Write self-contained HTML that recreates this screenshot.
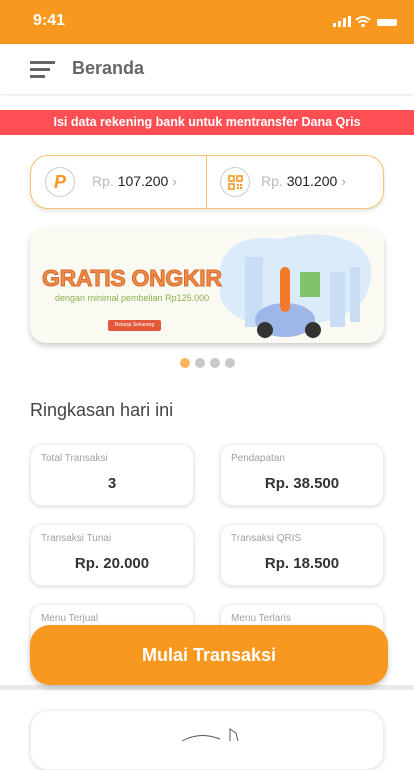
<!DOCTYPE html>
<html><head><meta charset="utf-8"><style>
*{margin:0;padding:0;box-sizing:border-box}
body{width:414px;height:741px;overflow:hidden;background:#fff;font-family:"Liberation Sans",sans-serif;position:relative}
.abs{position:absolute}
.card{position:absolute;background:#fff;border-radius:12px;box-shadow:0 1px 4px rgba(0,0,0,.15);border:1px solid #eee}
.lbl{position:absolute;left:10px;top:8px;font-size:10px;color:#a0a0a0}
.val{position:absolute;left:0;right:0;top:30px;text-align:center;font-size:15px;font-weight:bold;color:#333}
</style></head><body>
<div class="abs" style="left:0;top:0;width:414px;height:44px;background:#F8981F"></div>
<div class="abs" style="left:33px;top:12px;color:#fff;font-size:16px;font-weight:bold">9:41</div>
<svg class="abs" style="left:332px;top:15px" width="68" height="14">
<rect x="1" y="8" width="3" height="4" fill="#fff"/><rect x="6" y="6" width="3" height="6" fill="#fff"/><rect x="11" y="3" width="3" height="9" fill="#fff"/><rect x="16" y="1" width="3" height="11" fill="#fff"/>
<path d="M24 5 Q31 -1 38 5 M26.5 7.5 Q31 4 35.5 7.5" stroke="#fff" stroke-width="2" fill="none"/><circle cx="31" cy="10.5" r="1.7" fill="#fff"/>
<rect x="45" y="4" width="20" height="7" rx="2" fill="#fff"/></svg>
<div class="abs" style="left:0;top:44px;width:414px;height:50px;background:#fff;box-shadow:0 1px 3px rgba(0,0,0,.12)"></div>
<div class="abs" style="left:30px;top:61px;width:25px;height:3px;background:#666"></div>
<div class="abs" style="left:30px;top:68px;width:20px;height:3px;background:#666"></div>
<div class="abs" style="left:30px;top:75px;width:15px;height:3px;background:#666"></div>
<div class="abs" style="left:72px;top:58px;font-size:18px;font-weight:bold;color:#666">Beranda</div>
<div class="abs" style="left:0;top:110px;width:414px;height:25px;background:#FF4F55;color:#fff;font-size:12.5px;font-weight:bold;text-align:center;line-height:25px">Isi data rekening bank untuk mentransfer Dana Qris</div>
<div class="abs" style="left:30px;top:155px;width:354px;height:54px;border:1px solid #F9C070;border-radius:18px;box-shadow:0 2px 5px rgba(0,0,0,.12);background:#fff"></div>
<div class="abs" style="left:206px;top:155px;width:1px;height:54px;background:#F9C070"></div>
<div class="abs" style="left:45px;top:167px;width:30px;height:30px;border:1px solid #ccc;border-radius:50%;color:#F8981F;font-weight:bold;font-style:italic;font-size:18px;text-align:center;line-height:28px">P</div>
<div class="abs" style="left:92px;top:173px;font-size:14px;color:#222"><span style="color:#bbb">Rp. </span>107.200 <span style="color:#aaa">›</span></div>
<div class="abs" style="left:220px;top:167px;width:30px;height:30px;border:1px solid #ccc;border-radius:50%"></div>
<svg class="abs" style="left:228px;top:175px" width="15" height="15"><g fill="none" stroke="#F8981F" stroke-width="1.6"><rect x="1" y="1" width="5" height="5"/><rect x="9" y="1" width="5" height="5"/><rect x="1" y="9" width="5" height="5"/></g><rect x="9" y="9" width="2" height="2" fill="#F8981F"/><rect x="12" y="12" width="2" height="2" fill="#F8981F"/><rect x="12" y="9" width="2" height="2" fill="#F8981F"/><rect x="9" y="12" width="2" height="2" fill="#F8981F"/></svg>
<div class="abs" style="left:261px;top:173px;font-size:14px;color:#222"><span style="color:#bbb">Rp. </span>301.200 <span style="color:#aaa">›</span></div>
<div class="abs" style="left:30px;top:227px;width:354px;height:116px;background:#FAFAF3;border-radius:16px;box-shadow:0 3px 6px rgba(0,0,0,.2);overflow:hidden">
<svg width="354" height="116" style="position:absolute;left:0;top:0">
<path d="M190 40 Q200 5 250 12 Q300 0 330 20 Q350 40 335 70 Q320 95 260 100 Q200 100 190 70 Z" fill="#DCEBFA"/>
<rect x="215" y="30" width="18" height="70" fill="#C9DEF5"/><rect x="300" y="45" width="15" height="55" fill="#C9DEF5"/><rect x="320" y="40" width="10" height="55" fill="#C9DEF5"/>
<ellipse cx="255" cy="93" rx="30" ry="17" fill="#9EB6E8"/><circle cx="235" cy="103" r="8" fill="#333"/><circle cx="283" cy="103" r="8" fill="#333"/>
<rect x="250" y="40" width="10" height="45" rx="5" fill="#F47A2B"/><rect x="270" y="45" width="20" height="25" fill="#7FC46A"/>
</svg>
<div style="position:absolute;left:12px;top:38px;font-size:23px;font-weight:bold;color:#F08C4A;letter-spacing:-0.3px;-webkit-text-stroke:1px #D66A2A">GRATIS ONGKIR</div>
<div style="position:absolute;left:25px;top:66px;font-size:9px;color:#8DB04E">dengan minimal pembelian Rp125.000</div>
<div style="position:absolute;left:78px;top:93px;width:53px;height:11px;background:#E3583A;border-radius:2px;color:#fff;font-size:5px;text-align:center;line-height:11px">Belanja Sekarang</div>
</div>
<div class="abs" style="left:180px;top:358px;width:10px;height:10px;border-radius:50%;background:#FBB55A"></div>
<div class="abs" style="left:195px;top:358px;width:10px;height:10px;border-radius:50%;background:#c8c8c8"></div>
<div class="abs" style="left:210px;top:358px;width:10px;height:10px;border-radius:50%;background:#c8c8c8"></div>
<div class="abs" style="left:225px;top:358px;width:10px;height:10px;border-radius:50%;background:#c8c8c8"></div>
<div class="abs" style="left:30px;top:400px;font-size:18px;color:#444">Ringkasan hari ini</div>
<div class="card" style="left:30px;top:444px;width:164px;height:62px"><div class="lbl">Total Transaksi</div><div class="val">3</div></div>
<div class="card" style="left:220px;top:444px;width:164px;height:62px"><div class="lbl">Pendapatan</div><div class="val">Rp. 38.500</div></div>
<div class="card" style="left:30px;top:524px;width:164px;height:62px"><div class="lbl">Transaksi Tunai</div><div class="val">Rp. 20.000</div></div>
<div class="card" style="left:220px;top:524px;width:164px;height:62px"><div class="lbl">Transaksi QRIS</div><div class="val">Rp. 18.500</div></div>
<div class="card" style="left:30px;top:604px;width:164px;height:62px"><div class="lbl">Menu Terjual</div></div>
<div class="card" style="left:220px;top:604px;width:164px;height:62px"><div class="lbl">Menu Terlaris</div></div>
<div class="abs" style="left:0;top:685px;width:414px;height:5px;background:#eaeaea"></div>
<div class="abs" style="left:30px;top:625px;width:358px;height:60px;background:#F8981F;border-radius:20px;box-shadow:0 3px 6px rgba(0,0,0,.2);color:#fff;font-size:18px;font-weight:bold;text-align:center;line-height:60px">Mulai Transaksi</div>
<div class="card" style="left:30px;top:710px;width:354px;height:60px;border-radius:18px"></div>
<svg class="abs" style="left:180px;top:727px" width="70" height="14"><path d="M2 14 Q20 4 40 12 M50 14 L50 2 L56 6 L58 14" stroke="#555" fill="none"/></svg>
</body></html>
